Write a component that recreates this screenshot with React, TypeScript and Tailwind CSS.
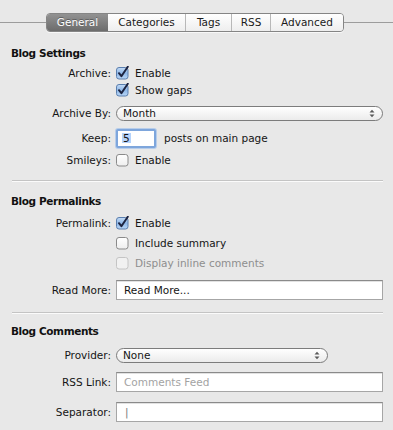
import type { ReactNode } from "react";

type Tab = { label: string; width: string; active?: boolean };

const tabs: Tab[] = [
  { label: "General", width: "w-[61px]", active: true },
  { label: "Categories", width: "w-[77px]" },
  { label: "Tags", width: "w-[46px]" },
  { label: "RSS", width: "w-[39px]" },
  { label: "Advanced", width: "w-[73px]" },
];

export default function App() {
  return (
    <div className="h-[430px] w-[393px] overflow-hidden bg-[#e8e8e8] font-['DejaVu_Sans',sans-serif] text-[10.5px] leading-none text-[#151515]">
      {/* Tab strip with the rule running behind it */}
      <div className="flex items-center pt-[13px]">
        <div className="h-px w-[46px] bg-[#9c9c9c]" />
        <TabBar />
        <div className="h-px flex-1 bg-[#9c9c9c]" />
      </div>

      {/* Blog Settings */}
      <Heading className="mt-[14px]">Blog Settings</Heading>
      <Row label="Archive:" className="mt-[5px] h-[17px]">
        <Check checked label="Enable" />
      </Row>
      <Row className="h-[17px]">
        <Check checked label="Show gaps" />
      </Row>
      <Row label="Archive By:" className="mt-[3px] h-[22px]">
        <Popup value="Month" className="w-[267px]" />
      </Row>
      <Row label="Keep:" className="mt-[3px] h-[22px]">
        <div className="flex h-[19px] w-[40px] items-center rounded-[2px] border-2 border-[#7ea6dc] bg-white pl-[4px] shadow-[0_0_0_1px_#b7cdea]">
          <span className="bg-[#b5d3fb] px-px">5</span>
        </div>
        <span className="ml-[8px]">posts on main page</span>
      </Row>
      <Row label="Smileys:" className="mt-[3px] h-[17px]">
        <Check label="Enable" />
      </Row>
      <Divider className="mt-[11px]" />

      {/* Blog Permalinks */}
      <Heading className="mt-[12px]">Blog Permalinks</Heading>
      <Row label="Permalink:" className="mt-[7px] h-[17px]">
        <Check checked label="Enable" />
      </Row>
      <Row className="mt-[3px] h-[17px]">
        <Check label="Include summary" />
      </Row>
      <Row className="mt-[3px] h-[17px]">
        <Check disabled label="Display inline comments" />
      </Row>
      <Row label="Read More:" className="mt-[8px] h-[20px]">
        <Field value="Read More..." />
      </Row>
      <Divider className="mt-[12px]" />

      {/* Blog Comments */}
      <Heading className="mt-[10px]">Blog Comments</Heading>
      <Row label="Provider:" className="mt-[8px] h-[18px]">
        <Popup value="None" className="w-[212px]" />
      </Row>
      <Row label="RSS Link:" className="mt-[8px] h-[20px]">
        <Field placeholder="Comments Feed" />
      </Row>
      <Row label="Separator:" className="mt-[10px] h-[20px]">
        <Field value="|" muted />
      </Row>
    </div>
  );
}

function TabBar() {
  return (
    <div className="flex h-[19px] overflow-hidden rounded-[4px] border border-[#858585] shadow-[0_1px_0_rgba(255,255,255,0.7)]">
      {tabs.map((tab, i) => (
        <div
          key={tab.label}
          className={`flex items-center justify-center ${tab.width} ${
            tab.active
              ? "bg-linear-to-b from-[#929292] to-[#6c6c6c] text-white [text-shadow:0_-1px_0_rgba(0,0,0,0.35)]"
              : "bg-linear-to-b from-white to-[#eeeeee] text-[#1a1a1a]"
          } ${i > 1 ? "border-l border-[#b8b8b8]" : ""}`}
        >
          {tab.label}
        </div>
      ))}
    </div>
  );
}

function Heading({ children, className }: { children: ReactNode; className?: string }) {
  return (
    <div className={`ml-[11px] flex h-[14px] items-center font-bold tracking-[-0.4px] text-[#111] ${className ?? ""}`}>
      {children}
    </div>
  );
}

function Row({ label, className, children }: { label?: string; className?: string; children: ReactNode }) {
  return (
    <div className={`flex items-center ${className ?? ""}`}>
      <div className="w-[111px] shrink-0 text-right">{label}</div>
      <div className="ml-[5px] flex items-center">{children}</div>
    </div>
  );
}

function Divider({ className }: { className?: string }) {
  return <div className={`ml-[12px] mr-[10px] border-t border-b border-t-[#c4c4c4] border-b-[#fbfbfb] ${className ?? ""}`} />;
}

function Check({ label, checked, disabled }: { label: string; checked?: boolean; disabled?: boolean }) {
  return (
    <div className="flex items-center">
      <svg width="14" height="14" viewBox="0 0 14 14" className="-mt-[1px] -mr-[2px]" aria-hidden="true">
        <defs>
          <linearGradient id="aqua" x1="0" y1="0" x2="0" y2="1">
            <stop offset="0" stopColor="#c5dcf6" />
            <stop offset="0.5" stopColor="#8fb8e8" />
            <stop offset="1" stopColor="#b9d6f6" />
          </linearGradient>
          <linearGradient id="plain" x1="0" y1="0" x2="0" y2="1">
            <stop offset="0" stopColor="#ffffff" />
            <stop offset="1" stopColor="#eeeeee" />
          </linearGradient>
        </defs>
        <rect
          x="0.5"
          y="1.5"
          width="11.5"
          height="11.5"
          rx="2.5"
          fill={checked ? "url(#aqua)" : disabled ? "#f1f1f1" : "url(#plain)"}
          stroke={checked ? "#5b7fae" : disabled ? "#c4c4c4" : "#8a8a8a"}
        />
        {checked && (
          <path
            d="M3 7.2 L5.4 10.2 L11.8 0.8"
            fill="none"
            stroke="#1d2440"
            strokeWidth="2"
            strokeLinecap="round"
            strokeLinejoin="round"
          />
        )}
      </svg>
      <span className={`ml-[7px] ${disabled ? "text-[#8e8e8e]" : ""}`}>{label}</span>
    </div>
  );
}

function Popup({ value, className }: { value: string; className?: string }) {
  return (
    <div
      className={`flex h-[15px] items-center rounded-full border border-[#7c7c7c] bg-linear-to-b from-white to-[#ebebeb] pl-[6px] pr-[7px] ${className ?? ""}`}
    >
      <span className="flex-1">{value}</span>
      <svg width="6" height="9" viewBox="0 0 6 9" aria-hidden="true">
        <path d="M0.5 3.5 L3 0.8 L5.5 3.5Z M0.5 5.5 L3 8.2 L5.5 5.5Z" fill="#5a5a5a" />
      </svg>
    </div>
  );
}

function Field({ value, placeholder, muted }: { value?: string; placeholder?: string; muted?: boolean }) {
  return (
    <div className="flex h-[20px] w-[267px] items-center border border-[#a6a6a6] border-t-[#8a8a8a] bg-white pl-[7px] shadow-[inset_0_1px_0_#e2e2e2]">
      {value ? (
        <span className={muted ? "pl-[1px] text-[#777]" : ""}>{value}</span>
      ) : (
        <span className="text-[#a3a3a3]">{placeholder}</span>
      )}
    </div>
  );
}
